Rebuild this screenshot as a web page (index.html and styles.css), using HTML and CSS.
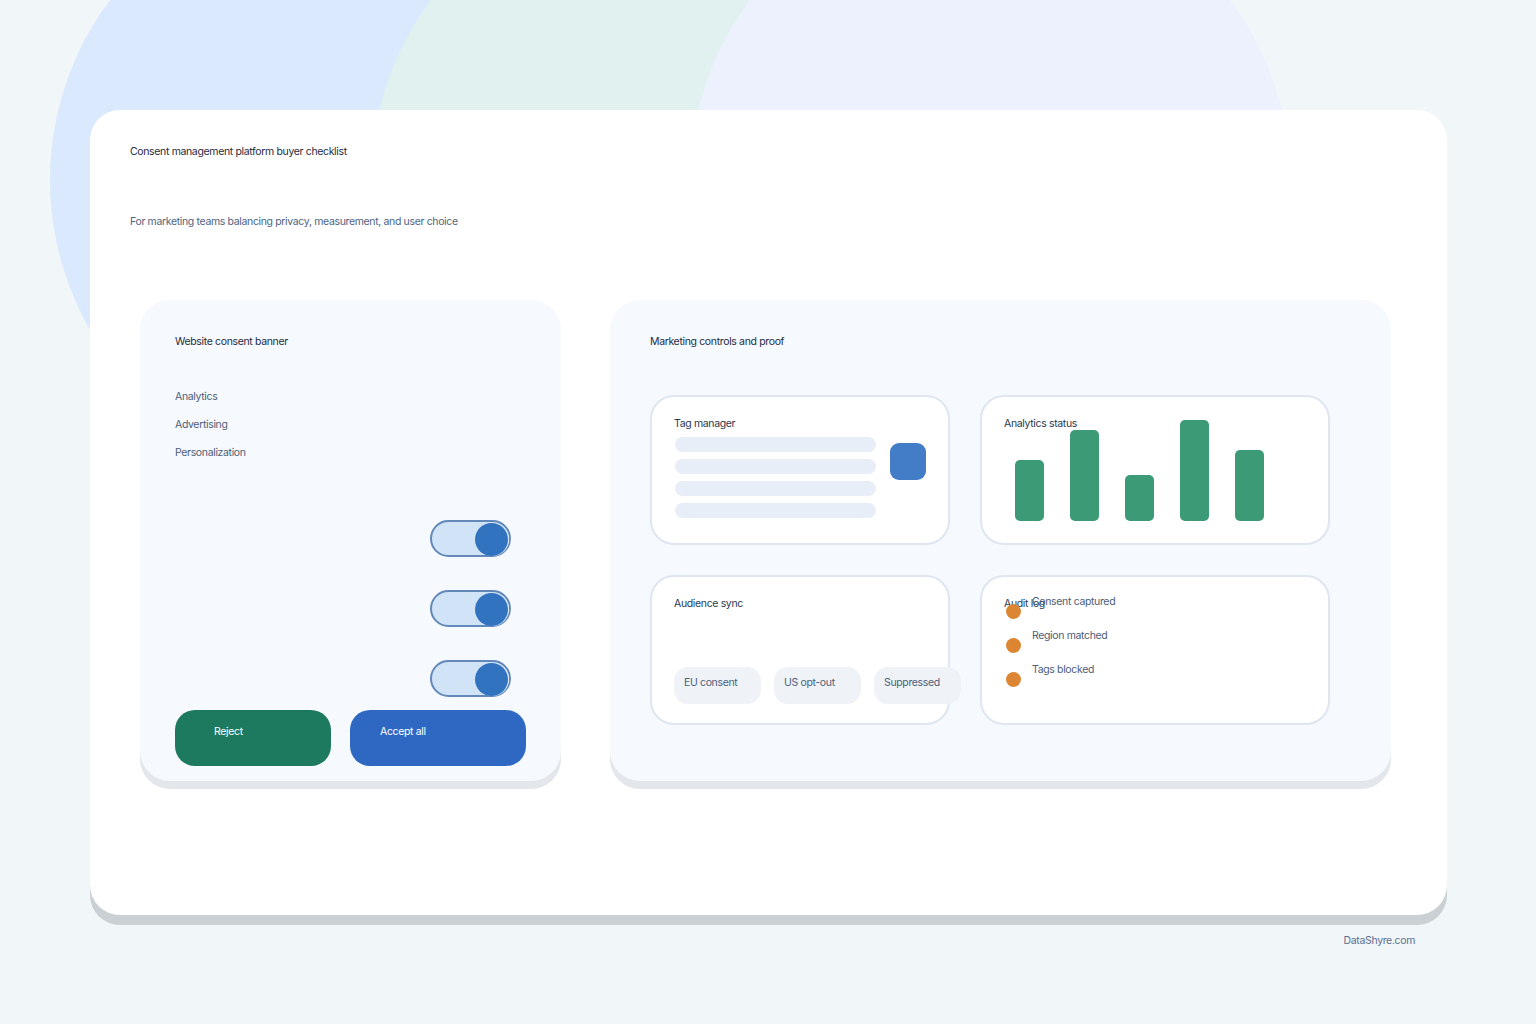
FILE: index.html
```html
<!DOCTYPE html>
<html>
<head>
<meta charset="utf-8">
<title>Consent management platform buyer checklist</title>
<link rel="stylesheet" href="styles.css">
</head>
<body>
<div class="bg-circle c-blue"></div>
<div class="bg-circle c-green"></div>
<div class="bg-circle c-lav"></div>

<main class="sheet">
  <header class="sheet-head">
    <h1 class="sheet-title">Consent management platform buyer checklist</h1>
    <p class="sheet-sub">For marketing teams balancing privacy, measurement, and user choice</p>
  </header>

  <div class="panels">
    <section class="panel panel-left">
      <h2 class="panel-title">Website consent banner</h2>
      <ul class="pref-list">
        <li>Analytics</li>
        <li>Advertising</li>
        <li>Personalization</li>
      </ul>
      <div class="toggles">
        <div class="toggle"><span class="knob"></span></div>
        <div class="toggle"><span class="knob"></span></div>
        <div class="toggle"><span class="knob"></span></div>
      </div>
      <div class="actions">
        <div class="btn btn-reject" role="button">Reject</div>
        <div class="btn btn-accept" role="button">Accept all</div>
      </div>
    </section>

    <section class="panel panel-right">
      <h2 class="panel-title">Marketing controls and proof</h2>
      <div class="tiles">
        <div class="tile tile-narrow">
          <h3 class="tile-title">Tag manager</h3>
          <div class="tag-row">
            <div class="tag-lines">
              <span></span><span></span><span></span><span></span>
            </div>
            <span class="tag-square"></span>
          </div>
        </div>
        <div class="tile tile-wide">
          <h3 class="tile-title">Analytics status</h3>
          <div class="chart">
            <span class="bar" style="height:61px"></span>
            <span class="bar" style="height:91px"></span>
            <span class="bar" style="height:46px"></span>
            <span class="bar" style="height:101px"></span>
            <span class="bar" style="height:71px"></span>
          </div>
        </div>
        <div class="tile tile-narrow">
          <h3 class="tile-title">Audience sync</h3>
          <div class="chips">
            <span class="chip">EU consent</span>
            <span class="chip">US opt-out</span>
            <span class="chip">Suppressed</span>
          </div>
        </div>
        <div class="tile tile-wide tile-audit">
          <h3 class="tile-title">Audit log</h3>
          <ul class="audit-list">
            <li><span class="dot"></span><span>Consent captured</span></li>
            <li><span class="dot"></span><span>Region matched</span></li>
            <li><span class="dot"></span><span>Tags blocked</span></li>
          </ul>
        </div>
      </div>
    </section>
  </div>
</main>

<footer class="footer">DataShyre.com</footer>
</body>
</html>
```

FILE: styles.css
```css
* { box-sizing: border-box; }

html, body {
  margin: 0;
  padding: 0;
}

body {
  width: 1536px;
  height: 1024px;
  overflow: hidden;
  position: relative;
  background: #f1f6f9;
  font-family: Inter, "Liberation Sans", sans-serif;
  letter-spacing: -0.35px;
  color: #1f2b3e;
}

h1, h2, h3, p, ul { margin: 0; padding: 0; font-weight: 400; }
ul { list-style: none; }

.bg-circle {
  position: absolute;
  width: 600px;
  height: 600px;
  border-radius: 50%;
  top: -120px;
}
.c-blue { left: 50px; background: #dae9fd; }
.c-green { left: 371px; background: #e0f1f0; }
.c-lav { left: 690px; background: #ecf1fd; }

.sheet {
  position: relative;
  width: 1357px;
  height: 805px;
  margin: 110px 0 0 90px;
  background: #ffffff;
  border-radius: 30px;
  box-shadow: 0 10px 0 #cbd0d4;
}

.sheet-head {
  padding: 36px 40px 0;
}
.sheet-title {
  font-size: 10.5px;
  line-height: 12px;
  color: #1f2b3e;
}
.sheet-sub {
  margin-top: 58px;
  font-size: 10.5px;
  line-height: 12px;
  color: #4f6480;
}

.panels {
  display: flex;
  gap: 49px;
  margin-top: 72px;
  padding-left: 50px;
}

.panel {
  height: 481px;
  background: #f6f9fd;
  border-radius: 30px;
  box-shadow: 0 8px 0 #e3e7eb;
}
.panel-left {
  width: 421px;
  padding: 36px 35px 0;
  display: flex;
  flex-direction: column;
}
.panel-right {
  width: 781px;
  padding: 36px 40px 0;
}

.panel-title {
  font-size: 10.5px;
  line-height: 12px;
  color: #1f2b3e;
}

.pref-list {
  margin-top: 35px;
}
.pref-list li {
  font-size: 10.5px;
  line-height: 28px;
  color: #4c5e78;
}

.toggles {
  margin-top: 53px;
  margin-right: 15px;
  display: flex;
  flex-direction: column;
  align-items: flex-end;
  gap: 33px;
}
.toggle {
  position: relative;
  width: 81px;
  height: 37px;
  border-radius: 19px;
  background: #d1e3f7;
  border: 2px solid #6289ba;
}
.knob {
  position: absolute;
  right: 1px;
  top: 1px;
  width: 33px;
  height: 33px;
  border-radius: 50%;
  background: #3273c0;
  box-shadow: 1px 0 0 #e4eefa;
}

.actions {
  margin-top: 13px;
  display: flex;
  gap: 19px;
}
.btn {
  height: 56px;
  border-radius: 20px;
  padding-top: 16px;
  font-size: 10.5px;
  line-height: 12px;
  color: #ffffff;
  cursor: pointer;
}
.btn-reject {
  width: 156px;
  background: #1d7a5f;
  padding-left: 39px;
}
.btn-accept {
  width: 176px;
  background: #2f68c3;
  padding-left: 30px;
}

.tiles {
  margin-top: 47px;
  display: grid;
  grid-template-columns: 300px 350px;
  grid-template-rows: 150px 150px;
  gap: 30px;
}
.tile {
  position: relative;
  background: #ffffff;
  border: 2px solid #dfe6f1;
  border-radius: 24px;
  padding: 21px 22px 0;
}
.tile-title {
  font-size: 10.5px;
  line-height: 12px;
  color: #2a3850;
}

.tag-row {
  margin-top: 7px;
  margin-left: 1px;
  display: flex;
  gap: 14px;
  align-items: flex-start;
}
.tag-lines {
  width: 201px;
  display: flex;
  flex-direction: column;
  gap: 7px;
}
.tag-lines span {
  display: block;
  height: 15px;
  border-radius: 8px;
  background: #e7eef8;
}
.tag-square {
  margin-top: 6px;
  width: 36px;
  height: 37px;
  border-radius: 9px;
  background: #437dc8;
}

.chart {
  margin-top: -10px;
  margin-left: 11px;
  height: 101px;
  display: flex;
  align-items: flex-end;
  gap: 26px;
}
.bar {
  width: 29px;
  border-radius: 5px;
  background: #3d9a77;
}

.chips {
  margin-top: 57px;
  display: flex;
  gap: 13px;
}
.chip {
  flex: 0 0 87px;
  height: 37px;
  border-radius: 14px;
  background: #eff3f8;
  padding: 10px 0 0 10px;
  font-size: 10.5px;
  line-height: 12px;
  color: #4c5e78;
  white-space: nowrap;
}

.audit-list {
  position: absolute;
  left: 24px;
  top: 19px;
}
.audit-list li {
  display: flex;
  align-items: flex-start;
  gap: 11px;
  height: 34px;
  font-size: 10.5px;
  line-height: 12px;
  color: #4c5e78;
}
.dot {
  margin-top: 8px;
  width: 15px;
  height: 15px;
  border-radius: 50%;
  background: #dc8633;
  flex: none;
}

.footer {
  width: 1357px;
  margin: 20px 0 0 90px;
  padding-right: 32px;
  text-align: right;
  font-size: 10.5px;
  line-height: 12px;
  color: #5a7090;
}
```
